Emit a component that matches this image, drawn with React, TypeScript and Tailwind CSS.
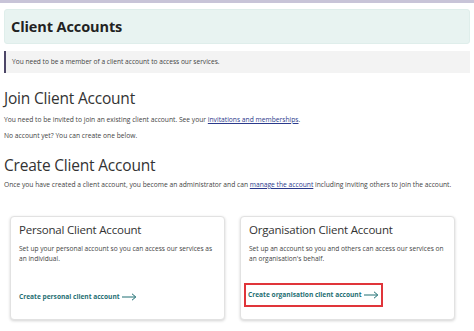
import React from "react";

const Arrow = () => (
  <svg width="15" height="8" viewBox="0 0 15 8" className="ml-[2px] inline-block" fill="none">
    <path d="M0 4h13.5M10 0.8L13.8 4L10 7.2" stroke="#1f6f73" strokeWidth="1" />
  </svg>
);

const Card = ({
  title,
  desc,
  link,
  boxed,
}: {
  title: string;
  desc: string;
  link: string;
  boxed?: boolean;
}) => (
  <div className="w-[215px] h-[104px] rounded-[4px] border border-[#e2e2e2] bg-white shadow-[0_1px_3px_rgba(0,0,0,0.18)] px-[8px] pt-[5px] flex flex-col">
    <div className="text-[11.5px] leading-[16px] tracking-[-0.2px] text-[#333]">{title}</div>
    <div className="mt-[6px] text-[6.6px] leading-[10px] text-[#444]">{desc}</div>
    <div className="mt-auto mb-[14px]">
      <span
        className={
          "inline-flex items-center text-[6.6px] leading-[10px] font-bold text-[#1f6f73] " +
          (boxed ? "outline outline-2 outline-[#e0353a] px-[2px] py-[5px] -ml-[3px]" : "")
        }
      >
        {link}
        <Arrow />
      </span>
    </div>
  </div>
);

export default function App() {
  return (
    <div className="w-[474px] h-[331px] bg-white overflow-hidden font-['Open_Sans',sans-serif] text-[#333]">
      <div className="h-[3px] bg-[#c8c4d8]" />
      <div className="px-[4px]">
        <div className="mt-[6px] h-[35px] rounded-[3px] bg-[#e8f3f1] border border-[#dfeeeb] px-[6px] flex items-center">
          <h1 className="text-[14.5px] font-bold tracking-[-0.1px] text-[#222]">Client Accounts</h1>
        </div>
        <div className="mt-[7px] h-[22px] bg-[#f3f3f3] border-l-2 border-[#4d4768] px-[6px] flex items-center text-[6.6px] text-[#444]">
          You need to be a member of a client account to access our services.
        </div>
        <h2 className="mt-[13px] text-[15.5px] leading-[24px] tracking-[-0.2px] text-[#333]">Join Client Account</h2>
        <p className="mt-[5px] text-[6.7px] leading-[10px] text-[#444]">
          You need to be invited to join an existing client account. See your{" "}
          <span className="underline text-[#2b3a8c]">invitations and memberships</span>.
        </p>
        <p className="mt-[6px] text-[6.7px] leading-[10px] text-[#444]">No account yet? You can create one below.</p>
        <h2 className="mt-[12px] text-[15.5px] leading-[24px] tracking-[-0.2px] text-[#333]">Create Client Account</h2>
        <p className="mt-[3px] text-[6.7px] leading-[10px] whitespace-nowrap text-[#444]">
          Once you have created a client account, you become an administrator and can{" "}
          <span className="underline text-[#2b3a8c]">manage the account</span> including inviting others to join the
          account.
        </p>
        <div className="mt-[26px] ml-[6px] flex gap-[15px]">
          <Card
            title="Personal Client Account"
            desc="Set up your personal account so you can access our services as an individual."
            link="Create personal client account"
          />
          <Card
            title="Organisation Client Account"
            desc="Set up an account so you and others can access our services on an organisation's behalf."
            link="Create organisation client account"
            boxed
          />
        </div>
      </div>
    </div>
  );
}
